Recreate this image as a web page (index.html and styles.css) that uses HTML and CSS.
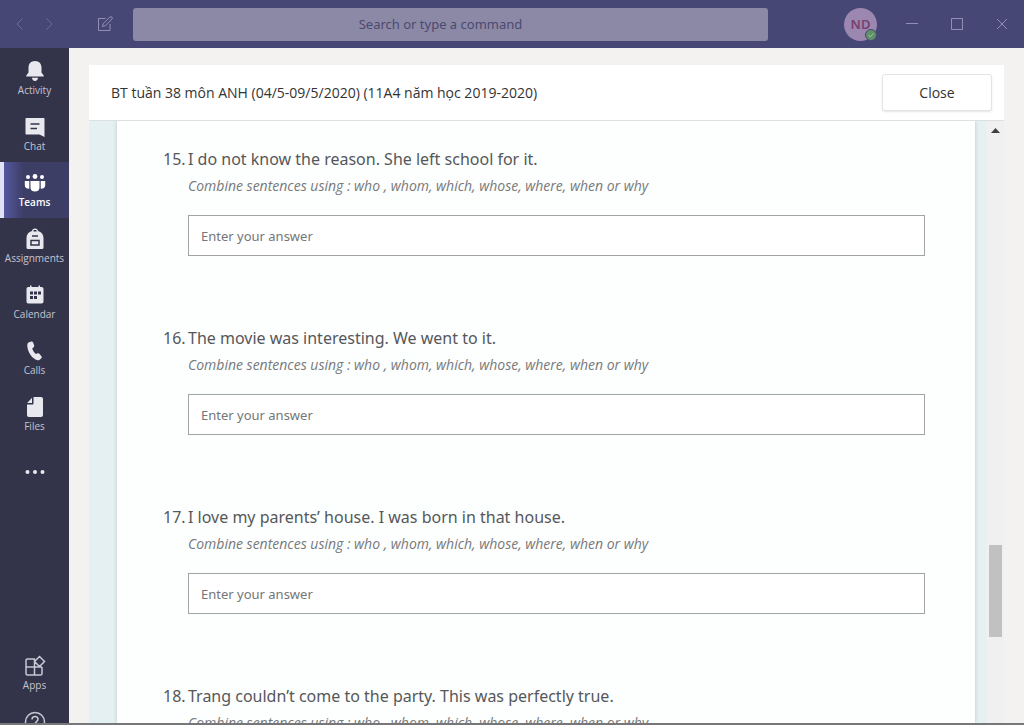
FILE: index.html
```html
<!DOCTYPE html>
<html lang="vi">
<head>
    <meta charset="UTF-8">
    <meta name="viewport" content="width=device-width, initial-scale=1.0">
    <title>Microsoft Teams</title>
    <link rel="stylesheet" href="styles.css">
</head>
<body>
    <header class="topbar">
        <div class="topbar-nav">
            <button class="icon-btn" aria-label="Back">
                <svg width="18" height="18" viewBox="0 0 18 18"><path d="M11.500 3.500 6 9l5.500 5.500"/></svg>
            </button>
            <button class="icon-btn" aria-label="Forward">
                <svg width="18" height="18" viewBox="0 0 18 18"><path d="M6.500 3.500 12 9l-5.500 5.500"/></svg>
            </button>
        </div>
        <button class="icon-btn compose" aria-label="New chat">
            <svg width="18" height="18" viewBox="0 0 18 18"><path d="M9.500 3.500h-7v12h11.500V9M6.500 11.500l.8-3L14 2q1-.8 1.900.1t.1 1.900L9.500 10.700z"/></svg>
        </button>
        <input class="search" type="text" aria-label="Search" placeholder="Search or type a command">
        <button class="avatar" aria-label="Profile">ND
            <svg class="status" width="12" height="12" viewBox="0 0 12 12"><circle cx="6" cy="6" r="5.500"/><path d="m3.500 6.200 1.700 1.600 3.300-3.400"/></svg>
        </button>
        <div class="window-controls">
            <button class="icon-btn" aria-label="Minimize">
                <svg width="14" height="14" viewBox="0 0 14 14"><path d="M1 6.500h12"/></svg>
            </button>
            <button class="icon-btn" aria-label="Maximize">
                <svg width="14" height="14" viewBox="0 0 14 14"><path d="M1.500 1.500h11v11h-11z"/></svg>
            </button>
            <button class="icon-btn" aria-label="Close window">
                <svg width="14" height="14" viewBox="0 0 14 14"><path d="m2 2 10 10M12 2 2 12"/></svg>
            </button>
        </div>
    </header>

    <div class="main">
        <nav class="rail">
            <a class="rail-item" href="#">
                <svg width="22" height="22" viewBox="0 0 22 22"><path d="M11 1c-4 0-6.500 2.800-6.500 6.500v5L2.300 15.500c-.3.600 0 1 .6 1h16.200c.6 0 .9-.4.6-1l-2.200-3v-5C17.500 3.800 15 1 11 1zM8 17.800h6c0 2-1.300 3.200-3 3.200s-3-1.200-3-3.200z"/></svg>
                Activity
            </a>
            <a class="rail-item" href="#">
                <svg width="22" height="22" viewBox="0 0 22 22"><path d="M2.500 2h17c.7 0 1 .3 1 1v18l-5-2.500h-13c-.7 0-1-.3-1-1V3c0-.7.300-1 1-1z"/><path class="cut" d="M6.500 8h9M6.500 12.500H13"/></svg>
                Chat
            </a>
            <a class="rail-item active" href="#">
                <svg width="22" height="22" viewBox="0 0 22 22"><circle cx="4" cy="5" r="2"/><circle cx="11" cy="4.500" r="2.400"/><circle cx="18" cy="5" r="2"/><path d="M6.500 9h9v7q-.5 3.500-4.500 3.500T6.500 16zM.8 9h4.500v7.800Q.8 17 .8 13zM21.200 9h-4.500v7.800q4.500.2 4.500-3.800z"/></svg>
                Teams
            </a>
            <a class="rail-item" href="#">
                <svg width="22" height="22" viewBox="0 0 22 22"><path d="M8 3c0-1.500 1.300-2.500 3-2.500S14 1.500 14 3c3.500 1 5.500 3.500 5.500 7v9.500c0 .8-.5 1.500-1.500 1.500H4c-1 0-1.500-.7-1.500-1.500V10c0-3.500 2-6 5.500-7z"/><path class="cut" d="M9.500 2.700h3M8 8h6M7 12.500h8v4.500H7z"/></svg>
                Assignments
            </a>
            <a class="rail-item" href="#">
                <svg width="22" height="22" viewBox="0 0 22 22"><path d="M6 1.500h1.500V3h7V1.500H16V3h1.500c1.300 0 2 .7 2 2v12.500c0 1.300-.7 2-2 2h-13c-1.300 0-2-.7-2-2V5c0-1.300.7-2 2-2H6z"/><path class="hole" d="M6 7.500h3v3H6zM10 7.500h3v3h-3zM14 7.500h3v3h-3zM6 12h3v3H6zM10 12h3v3h-3z"/></svg>
                Calendar
            </a>
            <a class="rail-item" href="#">
                <svg width="22" height="22" viewBox="0 0 22 22"><path d="M5 2.200 7.200 1.600c.9-.2 1.600.1 1.900.9l1 2.700c.3.800.1 1.500-.5 2L8.200 8.500c.7 2.200 1.900 4 3.600 5.400l1.800-.6c.8-.2 1.500 0 2 .6l1.800 2.300c.5.700.5 1.400-.1 2L16 19.500c-1.200 1.100-2.900 1.100-4.500.1C6.700 16.600 3.400 11 3.300 5.500 3.300 3.700 3.800 2.600 5 2.200z"/></svg>
                Calls
            </a>
            <a class="rail-item" href="#">
                <svg width="22" height="22" viewBox="0 0 22 22"><path d="M9.500 1H17c1.300 0 2 .7 2 2v16c0 1.300-.7 2-2 2H5c-1.300 0-2-.7-2-2V8.500h5.500c.7 0 1-.3 1-1zM8 1.800V7H3.200z"/></svg>
                Files
            </a>
            <button class="rail-item more" aria-label="More apps">
                <svg width="22" height="22" viewBox="0 0 22 22"><circle cx="3.500" cy="11" r="2"/><circle cx="11" cy="11" r="2"/><circle cx="18.500" cy="11" r="2"/></svg>
            </button>
            <div class="rail-bottom">
                <a class="rail-item outline" href="#">
                    <svg width="22" height="22" viewBox="0 0 22 22"><path d="M11 4H3.500Q2 4 2 5.500v13Q2 20 3.500 20h13q1.500 0 1.500-1.500V12M2 12h16M10.500 4v16M15.500 1.500 20.500 6.500l-5 5-5-5z"/></svg>
                    Apps
                </a>
                <a class="rail-item outline" href="#" aria-label="Help">
                    <svg width="22" height="22" viewBox="0 0 22 22"><circle cx="11" cy="11" r="9.500"/><path d="M8 8.500C8 6.700 9.300 5.500 11 5.500s3 1.200 3 2.800c0 2.200-3 2.500-3 5M11 15v1.500"/></svg>
                </a>
            </div>
        </nav>

        <main class="panel">
            <div class="panel-header">
                <h1>BT tuần 38 môn ANH (04/5-09/5/2020) (11A4 năm học 2019-2020)</h1>
                <button class="close-btn">Close</button>
            </div>
            <div class="panel-body">
                <form class="form-page">
                    <ol class="questions" start="15">
                        <li class="question">
                            <span class="num">15.</span>
                            <label for="q15">I do not know the reason. She left school for it.</label>
                            <p>Combine sentences using : who , whom, which, whose, where, when or why</p>
                            <input id="q15" type="text" placeholder="Enter your answer">
                        </li>
                        <li class="question">
                            <span class="num">16.</span>
                            <label for="q16">The movie was interesting. We went to it.</label>
                            <p>Combine sentences using : who , whom, which, whose, where, when or why</p>
                            <input id="q16" type="text" placeholder="Enter your answer">
                        </li>
                        <li class="question">
                            <span class="num">17.</span>
                            <label for="q17">I love my parents’ house. I was born in that house.</label>
                            <p>Combine sentences using : who , whom, which, whose, where, when or why</p>
                            <input id="q17" type="text" placeholder="Enter your answer">
                        </li>
                        <li class="question">
                            <span class="num">18.</span>
                            <label for="q18">Trang couldn’t come to the party. This was perfectly true.</label>
                            <p>Combine sentences using : who , whom, which, whose, where, when or why</p>
                            <input id="q18" type="text" placeholder="Enter your answer">
                        </li>
                    </ol>
                </form>
                <div class="scrollbar">
                    <svg width="9" height="5" viewBox="0 0 9 5"><path d="M4.500 0 9 5H0z"/></svg>
                    <div class="thumb"></div>
                </div>
            </div>
        </main>
    </div>
</body>
</html>
```

FILE: styles.css
```css
* {
    box-sizing: border-box;
}
body {
    margin: 0;
    height: 100vh;
    display: flex;
    flex-direction: column;
    overflow: hidden;
    font-family: "Noto Sans", "Open Sans", sans-serif;
    background: #f3f2f1;
    border-bottom: 2px solid #77777a;
}
button, input {
    font-family: inherit;
}
button {
    border: none;
    background: none;
    padding: 0;
    cursor: pointer;
}

/* top bar */
.topbar {
    height: 48px;
    flex-shrink: 0;
    display: flex;
    align-items: center;
    padding: 0 15px 0 11px;
    background: #464775;
}
.icon-btn {
    display: flex;
}
.icon-btn svg {
    fill: none;
    stroke: #9190b4;
}
.topbar-nav {
    display: flex;
    gap: 11px;
}
.topbar-nav svg {
    stroke: #6d6c97;
}
.compose {
    margin: 0 19px 0 38px;
}
.search {
    flex: 1;
    height: 33px;
    border: none;
    border-radius: 3px;
    background: #8b89a5;
    text-align: center;
    font-size: 13px;
    color: #464775;
    padding: 0 20px 0 0;
}
.search::placeholder {
    color: #4b4a72;
    opacity: 1;
}
.avatar {
    position: relative;
    width: 33px;
    height: 33px;
    margin: 0 28px 0 76px;
    border-radius: 50%;
    background: #9c87b0;
    color: #75416f;
    font-size: 13px;
    font-weight: 600;
}
.status {
    position: absolute;
    right: 0;
    bottom: 0;
    fill: #5f9168;
    stroke: #464775;
}
.status path {
    fill: none;
    stroke: #a9c5a9;
}
.window-controls {
    display: flex;
    gap: 31px;
}

/* left rail */
.main {
    flex: 1;
    min-height: 0;
    display: flex;
}
.rail {
    width: 69px;
    flex-shrink: 0;
    display: flex;
    flex-direction: column;
    padding-top: 2px;
    background: #33344a;
    overflow: hidden;
}
.rail-item {
    height: 56px;
    flex-shrink: 0;
    display: flex;
    flex-direction: column;
    align-items: center;
    padding-top: 10px;
    font-family: "Open Sans", sans-serif;
    font-size: 10px;
    line-height: 16px;
    color: #c4c4d0;
    text-decoration: none;
}
.rail-item svg {
    fill: #e8e8ee;
    flex-shrink: 0;
}
.rail-item .cut {
    fill: none;
    stroke: #33344a;
    stroke-width: 1.5;
}
.rail-item .hole {
    fill: #33344a;
}
.rail-item.active {
    background: linear-gradient(90deg, #5557a0, #3d3e66 30%);
    border-left: 4px solid #e2e2f6;
    padding-right: 4px;
    color: #fff;
    font-weight: 600;
}
.rail-item.active svg {
    fill: #fff;
}
.rail-item.more {
    padding-top: 19px;
}
.rail-item.outline svg {
    fill: none;
    stroke: #c8c8d4;
    stroke-width: 1.5;
}
.rail-bottom {
    height: 78px;
    margin-top: auto;
    overflow: hidden;
    flex-shrink: 0;
}

/* assignment panel */
.panel {
    flex: 1;
    display: flex;
    flex-direction: column;
    min-width: 0;
    margin: 17px 20px 0;
}
.panel-header {
    height: 56px;
    flex-shrink: 0;
    display: flex;
    align-items: center;
    justify-content: space-between;
    padding: 0 12px 0 22px;
    background: #fff;
    border-bottom: 1px solid #dbe0e1;
}
.panel-header h1 {
    margin: 0;
    font-family: "Open Sans", sans-serif;
    font-size: 14px;
    font-weight: 500;
    color: #333;
}
.close-btn {
    width: 110px;
    height: 37px;
    border: 1px solid #e5e4e3;
    border-radius: 3px;
    box-shadow: 0 1px 2px rgba(0, 0, 0, 0.1);
    background: #fff;
    font-family: "Open Sans", sans-serif;
    font-size: 14px;
    font-weight: 500;
    color: #333;
}
.panel-body {
    flex: 1;
    min-height: 0;
    display: flex;
    background: #e5f0f3;
    overflow: hidden;
}
.form-page {
    flex: 1;
    margin: 0 11px 0 28px;
    padding: 26px 50px 0 46px;
    background: #fdfefe;
    box-shadow: 0 0 4px rgba(0, 0, 0, 0.18);
}
.questions {
    list-style: none;
    margin: 0;
    padding: 0;
}
.question {
    display: grid;
    grid-template-columns: 25px 1fr;
    margin-bottom: 70px;
    font-size: 16px;
    line-height: 24px;
    color: #55585a;
}
.question p {
    grid-column: 2;
    margin: 5px 0 19px;
    font-family: "Open Sans", sans-serif;
    font-size: 14px;
    line-height: 20px;
    font-style: italic;
    color: #77797a;
}
.question input {
    grid-column: 2;
    height: 41px;
    padding: 0 12px;
    border: 1px solid #a0a4a4;
    border-radius: 0;
    background: #fff;
    font-size: 13px;
    color: #333;
}
.question input::placeholder {
    color: #747677;
    opacity: 1;
}
.scrollbar {
    width: 18px;
    display: flex;
    flex-direction: column;
    justify-content: space-between;
    align-items: center;
    padding: 7px 0 86px;
    background: #f0f0f0;
}
.scrollbar svg {
    fill: #404040;
}
.thumb {
    width: 13px;
    height: 92px;
    background: #c1c1c1;
}
```
